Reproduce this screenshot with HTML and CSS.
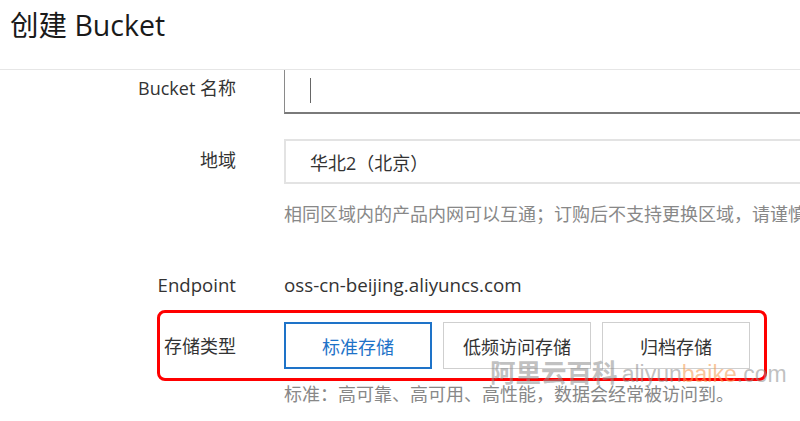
FILE: index.html
```html
<!DOCTYPE html>
<html lang="zh-CN">
<head>
<meta charset="utf-8">
<title>创建 Bucket</title>
<link rel="stylesheet" href="styles.css">
</head>
<body>
<div class="page">
  <header class="header"><h1 class="title">创建 Bucket</h1></header>
  <main class="form">
    <div class="row row-name">
      <div class="label label-name">Bucket 名称</div>
      <div class="field input"><span class="caret"></span></div>
    </div>
    <div class="row row-region">
      <div class="label">地域</div>
      <div class="field select">华北2（北京）</div>
    </div>
    <div class="help help-region">相同区域内的产品内网可以互通；订购后不支持更换区域，请谨慎选择。</div>
    <div class="row row-endpoint">
      <div class="label">Endpoint</div>
      <div class="value">oss-cn-beijing.aliyuncs.com</div>
    </div>
    <div class="row row-storage">
      <div class="label label-storage">存储类型</div>
      <div class="options">
        <button class="opt opt-active">标准存储</button>
        <button class="opt">低频访问存储</button>
        <button class="opt">归档存储</button>
      </div>
    </div>
    <div class="help help-storage">标准：高可靠、高可用、高性能，数据会经常被访问到。</div>
  </main>
  <div class="watermark"><span class="wm-cn">阿里云百科</span> <span class="wm-en">aliyun<span class="wm-orange">baike</span>.com</span></div>
</div>
</body>
</html>
```
FILE: styles.css
```css
html, body {
  margin: 0;
  padding: 0;
  background: #fff;
  overflow: hidden;
}
.page {
  position: relative;
  width: 800px;
  height: 421px;
  overflow: hidden;
  font-family: "Open Sans", "Noto Sans CJK SC", sans-serif;
  color: #333;
}
.header {
  height: 70px;
  box-sizing: border-box;
  border-bottom: 1px solid #e6e6e6;
  display: flex;
  align-items: flex-start;
  padding: 6px 0 0 10px;
}
.title {
  margin: 0;
  font-size: 28.5px;
  font-weight: 400;
  color: #1a1a1a;
  line-height: 38px;
}
.form {
  display: flex;
  flex-direction: column;
}
.row {
  display: flex;
  align-items: center;
  gap: 48px;
}
.label {
  width: 236px;
  flex: none;
  text-align: right;
  font-size: 18px;
  line-height: 24px;
  color: #333;
}
.label-name {
  padding-bottom: 8px;
}
.field {
  width: 600px;
  flex: none;
  box-sizing: border-box;
}
.input {
  height: 44px;
  border-left: 1.5px solid #8a8a8a;
  border-bottom: 2px solid #7a7a7a;
  display: flex;
  align-items: center;
  padding-left: 25px;
}
.caret {
  width: 1px;
  height: 25px;
  background: #666;
  margin-bottom: 2px;
}
.row-region {
  margin-top: 25px;
}
.select {
  height: 45px;
  border: 2px solid #e3e3e3;
  display: flex;
  align-items: center;
  padding-left: 24px;
  font-size: 18px;
  color: #333;
}
.row-region .label {
  padding-bottom: 4px;
}
.help {
  padding-left: 284px;
  font-size: 18px;
  line-height: 22px;
  color: #888;
  white-space: nowrap;
}
.help-region {
  margin-top: 19px;
}
.row-endpoint {
  margin-top: 48px;
}
.row-endpoint .label {
  font-size: 18.6px;
}
.value {
  font-size: 18.8px;
  line-height: 24px;
  color: #333;
  white-space: nowrap;
}
.row-storage {
  margin-top: 13px;
  margin-left: 157px;
  width: 610px;
  box-sizing: border-box;
  border: 3px solid #f00;
  border-radius: 8px;
  padding: 9px 0;
}
.label-storage {
  width: 76px;
}
.options {
  display: flex;
  gap: 11px;
}
.opt {
  width: 148px;
  height: 47px;
  box-sizing: border-box;
  background: #fff;
  border: 1.5px solid #cfcfcf;
  font-family: "Open Sans", "Noto Sans CJK SC", sans-serif;
  font-size: 18px;
  color: #333;
  padding: 0;
  margin: 0;
}
.opt-active {
  border: 2px solid #1e73c8;
  color: #1e73c8;
}
.help-storage {
  margin-top: 2px;
}
.watermark {
  position: absolute;
  left: 490px;
  top: 353px;
  white-space: nowrap;
  color: rgba(140, 140, 140, 0.55);
  line-height: 36px;
}
.wm-cn {
  font-family: "Noto Sans CJK SC", sans-serif;
  font-weight: 700;
  font-size: 25.5px;
}
.wm-en {
  font-family: "Liberation Sans", sans-serif;
  font-size: 23px;
}
.wm-orange {
  color: rgba(245, 160, 90, 0.6);
}
```
